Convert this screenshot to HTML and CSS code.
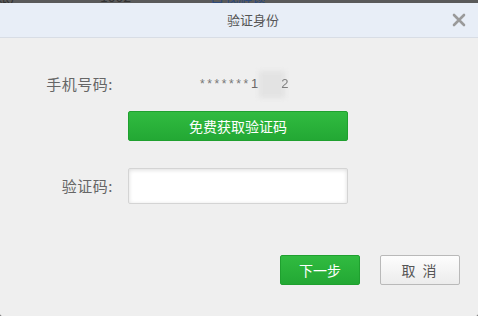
FILE: index.html
```html
<!DOCTYPE html>
<html lang="zh">
<head>
<meta charset="utf-8">
<link rel="stylesheet" href="styles.css">
</head>
<body>
<div class="backdrop">
  <span class="bg-a">账户</span><span class="bg-b">1002</span><span class="bg-c">自我解锁</span>
</div>
<div class="dialog">
  <div class="header">
    <span class="title">验证身份</span>
    <svg class="close" width="14" height="14" viewBox="0 0 14 14"><path d="M2 2 L12 12 M12 2 L2 12" stroke="#9a9a9a" stroke-width="2.6" stroke-linecap="round"/></svg>
  </div>
  <div class="content">
    <div class="form">
      <div class="label">手机号码:</div>
      <div class="value"><span class="stars">*******</span>1<span class="masked"></span><span class="last">2</span></div>
      <div></div>
      <button class="btn-green btn-wide">免费获取验证码</button>
      <div class="label code-label">验证码:</div>
      <div class="input"></div>
    </div>
    <div class="footer">
      <button class="btn-green btn-small">下一步</button>
      <button class="btn-gray btn-small">取&nbsp;消</button>
    </div>
  </div>
</div>
</body>
</html>
```
FILE: styles.css
```css
* { box-sizing: border-box; }
html, body {
  margin: 0;
  padding: 0;
  width: 478px;
  height: 316px;
  overflow: hidden;
  background: #555;
  font-family: "Noto Sans CJK SC", "Microsoft YaHei", sans-serif;
}
.backdrop {
  height: 3px;
  background: #5a5a5a;
  position: relative;
  overflow: hidden;
  font-size: 14px;
  line-height: 14px;
}
.backdrop span {
  position: absolute;
  top: -11px;
}
.bg-a { left: -4px; color: #333; }
.bg-b { left: 100px; color: #333; }
.bg-c { left: 210px; color: #2d4a7a; }
.dialog {
  height: 313px;
  background: #efefef;
  border-radius: 2px;
  display: flex;
  flex-direction: column;
}
.header {
  height: 35px;
  background: #e8eef7;
  border-bottom: 1px solid #d8dde5;
  display: flex;
  align-items: center;
  justify-content: center;
  position: relative;
}
.title {
  font-size: 13px;
  color: #555;
  margin-left: 28px;
  line-height: 34px;
}
.close {
  position: absolute;
  right: 12px;
  top: 10px;
}
.content {
  padding: 36px 18px 0 0;
  display: flex;
  flex-direction: column;
}
.form {
  display: grid;
  grid-template-columns: 113px 220px;
  column-gap: 15px;
  align-items: center;
}
.label {
  text-align: right;
  font-size: 15px;
  color: #666;
  line-height: 20px;
  height: 20px;
  letter-spacing: 0.5px;
}
.value {
  font-size: 13px;
  color: #666;
  line-height: 20px;
  padding-left: 72px;
  height: 20px;
  font-family: "Liberation Sans", Arial, sans-serif;
  display: flex;
  align-items: center;
}
.stars {
  font-size: 12px;
  letter-spacing: 2.6px;
  color: #777;
}
.masked {
  display: inline-block;
  width: 26px;
  height: 27px;
  margin: 0 -4px 0 1px;
  background: #e3e3e3;
  filter: blur(2px);
}
.last {
  opacity: 0.8;
}
.btn-green {
  background: linear-gradient(#31bb40, #23a834);
  border: 1px solid #1fa02f;
  border-radius: 2px;
  color: #fff;
  font-family: "Noto Sans CJK SC", sans-serif;
  font-size: 14px;
  padding: 0;
}
.btn-wide {
  height: 30px;
  width: 220px;
  margin-top: 17px;
  grid-column: 2;
}
.code-label {
  margin-top: 27px;
}
.input {
  margin-top: 27px;
  height: 36px;
  background: #fff;
  border: 1px solid #d4d4d4;
  border-radius: 2px;
  box-shadow: inset 0 1px 4px rgba(0,0,0,0.14);
}
.footer {
  margin-top: 51px;
  display: flex;
  justify-content: flex-end;
  gap: 20px;
}
.btn-small {
  width: 80px;
  height: 30px;
  font-size: 14px;
  font-family: "Noto Sans CJK SC", sans-serif;
  padding: 0;
}
.btn-gray {
  background: linear-gradient(#fdfdfd, #ececec);
  border: 1px solid #b9b9b9;
  border-radius: 2px;
  color: #555;
  letter-spacing: 2px;
}
```
